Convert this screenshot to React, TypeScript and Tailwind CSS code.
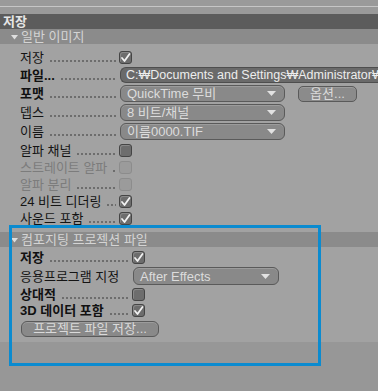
import React from "react";

const FONT = { fontFamily: '"Liberation Sans", "Noto Sans CJK KR", sans-serif' };

const Check = ({ on, disabled }: { on?: boolean; disabled?: boolean }) => (
  <span
    className={
      disabled
        ? "flex h-[13px] w-[13px] shrink-0 items-center justify-center rounded-[3px] border border-[#8c8c8c] bg-[#9b9b9b]"
        : "flex h-[13px] w-[13px] shrink-0 items-center justify-center rounded-[3px] border border-[#454545] bg-[#6d6d6d] shadow-[inset_1px_1px_0_#888]"
    }
  >
    {on && (
      <svg width="11" height="11" viewBox="0 0 11 11">
        <path d="M2 6 L4.5 9 L9.5 2" fill="none" stroke="#f2f2f2" strokeWidth="1.8" strokeLinecap="round" strokeLinejoin="round" />
      </svg>
    )}
  </span>
);

const Dropdown = ({ text, w, h = "h-[17px]" }: { text: string; w: string; h?: string }) => (
  <div
    className={`flex ${w} ${h} shrink-0 items-center justify-between rounded-[6px] border border-[#5a5a5a] bg-[#898989] pl-[6px] pr-[8px] text-[13px] leading-none text-[#dcdcdc] shadow-[inset_0_1px_0_#9c9c9c]`}
  >
    <span className="whitespace-nowrap">{text}</span>
    <svg width="9" height="5" viewBox="0 0 9 5" className="shrink-0">
      <path d="M0 0 H9 L4.5 5 Z" fill="#e2e2e2" />
    </svg>
  </div>
);

// label followed by a dotted leader up to the control
const Leader = ({ label, bold, w, dim, noDots }: { label: string; bold?: boolean; w: string; dim?: boolean; noDots?: boolean }) => (
  <div className={`flex ${w} shrink-0 items-end overflow-hidden`}>
    <span
      className={`whitespace-nowrap text-[13px] leading-[15px] ${bold ? "font-bold text-[#111]" : dim ? "text-[#7c7c7c]" : "text-[#141414]"}`}
    >
      {label}
    </span>
    {!noDots && (
      <span className="mb-[3px] ml-[5px] h-[2px] flex-1 bg-[radial-gradient(circle,#4a4a4a_0.55px,transparent_0.95px)] bg-[length:4px_2px] bg-repeat-x" />
    )}
  </div>
);

const SectionHeader = ({ title }: { title: string }) => (
  <div className="flex h-[15px] items-center bg-[#8b8b8b] pl-[11px] text-[13px] leading-none text-[#d4d4d4]">
    <svg width="7" height="5" viewBox="0 0 7 5" className="mr-[3px] mt-[2px]">
      <path d="M0 0 H7 L3.5 4.5 Z" fill="#dedede" />
    </svg>
    <span>{title}</span>
  </div>
);

const checkRows = [
  { label: "알파 채널", on: false, dim: false, h: "h-[18px]" },
  { label: "스트레이트 알파", on: false, dim: true, h: "h-[17px]" },
  { label: "알파 분리", on: false, dim: true, h: "h-[17px]" },
  { label: "24 비트 디더링", on: true, dim: false, h: "h-[17px]" },
  { label: "사운드 포함", on: true, dim: false, h: "h-[17px]" },
];

export default function App() {
  return (
    <div className="relative h-[391px] w-[378px] overflow-hidden bg-[#979797]" style={FONT}>
      {/* top strip */}
      <div className="h-[6px] bg-[#9a9a9a]" />
      <div className="h-[1px] bg-[#c6c6c6]" />
      <div className="h-[7px] bg-[#9a9a9a]" />
      <div className="flex h-[15px] items-center bg-[#5c5c5c] px-[3px] text-[13px] font-bold leading-none text-[#e6e6e6]">
        저장
      </div>

      {/* general image */}
      <SectionHeader title="일반 이미지" />
      <div className="bg-[#a2a2a2] px-[20px] pb-[5px] pt-[4px]">
        <div className="flex h-[18px] items-center">
          <Leader label="저장" w="w-[96px]" />
          <span className="ml-[3px]">
            <Check on />
          </span>
        </div>
        <div className="flex h-[18px] items-center">
          <Leader label="파일..." bold w="w-[96px]" />
          <div className="ml-[4px] flex h-[16px] w-[258px] shrink-0 items-center overflow-hidden rounded-l-[6px] border-y border-l border-[#4e4e4e] bg-[#6a6a6a] pl-[5px] text-[12.5px] leading-none text-[#ededed]">
            <span className="whitespace-nowrap">C:₩Documents and Settings₩Administrator₩</span>
          </div>
        </div>
        <div className="flex h-[19px] items-center">
          <Leader label="포맷" bold w="w-[96px]" />
          <div className="ml-[4px]">
            <Dropdown text="QuickTime 무비" w="w-[165px]" />
          </div>
          <div className="ml-[13px] flex h-[16px] w-[59px] items-center justify-center rounded-[5px] border border-[#5a5a5a] bg-[#8b8b8b] text-[13px] leading-none text-[#dadada] shadow-[inset_0_1px_0_#9c9c9c]">
            옵션...
          </div>
        </div>
        <div className="flex h-[19px] items-center">
          <Leader label="뎁스" w="w-[96px]" />
          <div className="ml-[4px]">
            <Dropdown text="8 비트/채널" w="w-[165px]" />
          </div>
        </div>
        <div className="flex h-[19px] items-center">
          <Leader label="이름" w="w-[96px]" />
          <div className="ml-[4px]">
            <Dropdown text="이름0000.TIF" w="w-[165px]" />
          </div>
        </div>
        {checkRows.map((r) => (
          <div key={r.label} className={`flex ${r.h} items-center`}>
            <Leader label={r.label} dim={r.dim} w="w-[96px]" />
            <span className="ml-[3px]">
              <Check on={r.on} disabled={r.dim} />
            </span>
          </div>
        ))}
      </div>

      {/* compositing project file */}
      <SectionHeader title="컴포지팅 프로젝션 파일" />
      <div className="bg-[#a2a2a2] px-[20px] pb-[4px] pt-[2px]">
        <div className="flex h-[17px] items-center">
          <Leader label="저장" bold w="w-[109px]" />
          <span className="ml-[3px]">
            <Check on />
          </span>
        </div>
        <div className="flex h-[20px] items-center">
          <Leader label="응용프로그램 지정" noDots w="w-[109px]" />
          <div className="ml-[4px]">
            <Dropdown text="After Effects" w="w-[146px]" h="h-[18px]" />
          </div>
        </div>
        <div className="flex h-[16px] items-center">
          <Leader label="상대적" bold w="w-[109px]" />
          <span className="ml-[3px]">
            <Check />
          </span>
        </div>
        <div className="flex h-[17px] items-center">
          <Leader label="3D 데이터 포함" bold w="w-[109px]" />
          <span className="ml-[3px]">
            <Check on />
          </span>
        </div>
        <div className="flex h-[19px] items-center">
          <div className="ml-[1px] flex h-[16px] w-[138px] items-center justify-center rounded-[6px] border border-[#5a5a5a] bg-[#898989] text-[13px] leading-none text-[#dadada] shadow-[inset_0_1px_0_#9c9c9c]">
            프로젝트 파일 저장...
          </div>
        </div>
      </div>

      {/* highlight frame */}
      <div className="absolute left-[9px] top-[225px] h-[141px] w-[312px] border-[3px] border-[#0b8bd0]" />
    </div>
  );
}
